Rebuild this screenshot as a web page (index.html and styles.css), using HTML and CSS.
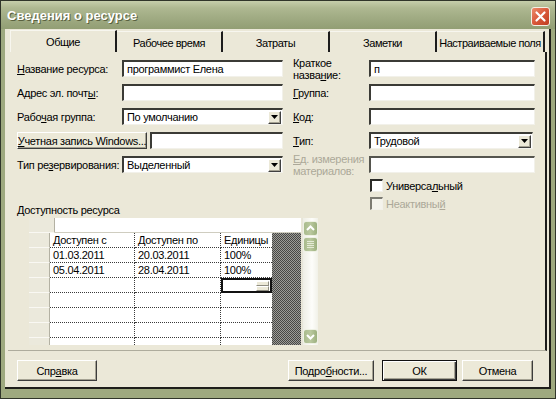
FILE: index.html
```html
<!DOCTYPE html>
<html lang="ru">
<head>
<meta charset="utf-8">
<title>Сведения о ресурсе</title>
<link rel="stylesheet" href="styles.css">
</head>
<body>
<div class="window">
  <div class="titlebar">
    <span class="title">Сведения о ресурсе</span>
    <span class="close"><svg width="17" height="17" viewBox="0 0 17 17"><path d="M4.5 4.5 L12.5 12.5 M12.5 4.5 L4.5 12.5" stroke="#fff" stroke-width="2.2" stroke-linecap="round"/></svg></span>
  </div>
  <div class="client">
    <div class="tabs">
      <div class="tab active w1">Общие</div>
      <div class="tab w2">Рабочее время</div>
      <div class="tab w3">Затраты</div>
      <div class="tab w4">Заметки</div>
      <div class="tab w5">Настраиваемые поля</div>
    </div>
    <div class="panel">
      <div class="form">
        <div class="lcol">
          <div class="row"><span class="lbl"><u>Н</u>азвание ресурса:</span><span class="inp wl">программист Елена</span></div>
          <div class="row"><span class="lbl">Адрес эл. почт<u>ы</u>:</span><span class="inp wl"></span></div>
          <div class="row"><span class="lbl">Рабо<u>ч</u>ая группа:</span><span class="inp combo wl"><span class="val">По умолчанию</span><span class="dd"><svg width="7" height="4" viewBox="0 0 7 4"><polygon points="0,0 7,0 3.5,4" fill="#000"/></svg></span></span></div>
          <div class="row"><span class="btn acct"><u>У</u>четная запись Windows...</span><span class="inp wacct"></span></div>
          <div class="row"><span class="lbl">Тип ре<u>з</u>ервирования:</span><span class="inp combo wl"><span class="val">Выделенный</span><span class="dd"><svg width="7" height="4" viewBox="0 0 7 4"><polygon points="0,0 7,0 3.5,4" fill="#000"/></svg></span></span></div>
        </div>
        <div class="rcol">
          <div class="row"><span class="lbl2 two">Краткое<br>назва<u>н</u>ие:</span><span class="inp wr">п</span></div>
          <div class="row"><span class="lbl2"><u>Г</u>руппа:</span><span class="inp wr"></span></div>
          <div class="row"><span class="lbl2"><u>К</u>од:</span><span class="inp wr"></span></div>
          <div class="row"><span class="lbl2"><u>Т</u>ип:</span><span class="inp combo wr2"><span class="val">Трудовой</span><span class="dd"><svg width="7" height="4" viewBox="0 0 7 4"><polygon points="0,0 7,0 3.5,4" fill="#000"/></svg></span></span></div>
          <div class="row"><span class="lbl2 two dis"><u>Е</u>д. измерения<br>материалов:</span><span class="inp dinp wr"></span></div>
          <div class="checks">
            <div class="chk"><span class="box"></span><span>Универса<u>л</u>ьный</span></div>
            <div class="chk dis"><span class="box"></span><span>Неактивны<u>й</u></span></div>
          </div>
        </div>
        <div class="avail">
          <div class="alabel"><u>Д</u>оступность ресурса</div>
          <div class="gridwrap">
            <div class="grid">
              <div class="toprow"><span class="corner"></span><span class="topfield"></span></div>
              <div class="table">
                <div class="rh"></div><div class="c">Доступен с</div><div class="c">Доступен по</div><div class="c last">Единицы</div>
                <div class="dither"></div>
                <div class="rh"></div><div class="c">01.03.2011</div><div class="c">20.03.2011</div><div class="c last">100%</div>
                <div class="rh"></div><div class="c">05.04.2011</div><div class="c">28.04.2011</div><div class="c last">100%</div>
                <div class="rh"></div><div class="c"></div><div class="c"></div><div class="c last sel"><span class="spin"><span></span><span></span></span></div>
                <div class="rh"></div><div class="c"></div><div class="c"></div><div class="c last"></div>
                <div class="rh"></div><div class="c"></div><div class="c"></div><div class="c last"></div>
                <div class="rh"></div><div class="c"></div><div class="c"></div><div class="c last"></div>
                <div class="rh"></div><div class="c"></div><div class="c"></div><div class="c last"></div>
              </div>
            </div>
            <div class="vscroll">
              <span class="sbtn"><svg width="13" height="13" viewBox="0 0 13 13"><polyline points="3,8 6.5,4.5 10,8" fill="none" stroke="#fff" stroke-width="2"/></svg></span>
              <span class="thumb"><i></i><i></i><i></i><i></i></span>
              <span class="sbtn down"><svg width="13" height="13" viewBox="0 0 13 13"><polyline points="3,5 6.5,8.5 10,5" fill="none" stroke="#fff" stroke-width="2"/></svg></span>
            </div>
          </div>
        </div>
      </div>
    </div>
    <div class="btns">
      <span class="btn b-help">Спр<u>а</u>вка</span>
      <span class="btn b-more">Подро<u>б</u>ности...</span>
      <span class="btn def b-ok">ОК</span>
      <span class="btn b-cancel">Отмена</span>
    </div>
  </div>
</div>
</body>
</html>
```

FILE: styles.css
```css
* { box-sizing: border-box; }
html, body { margin: 0; padding: 0; }
body {
  width: 556px; height: 399px; overflow: hidden;
  font-family: "Liberation Sans", Arial, sans-serif;
  font-size: 11px; color: #000;
  letter-spacing: -0.3px;
  background: #9aa67b;
}
u { text-decoration: underline; text-underline-offset: 1px; }

.window {
  width: 556px; height: 399px;
  border: 1px solid #30352a;
  background: #9ea97f;
  display: flex; flex-direction: column;
}
.titlebar {
  flex: none; height: 28px;
  display: flex; align-items: center; justify-content: space-between;
  padding: 0 5px 0 6px;
  background: linear-gradient(#c6ceab 0%, #aeb891 25%, #a0ab83 60%, #929e74 100%);
}
.title {
  color: #fff; font-weight: bold; font-size: 13px;
  text-shadow: 1px 1px 0 #59613f;
  letter-spacing: 0;
  margin-top: 1px;
}
.close {
  width: 19px; height: 19px; margin-top: 3px;
  border: 1px solid #f3f0e6; border-radius: 3px;
  background: linear-gradient(135deg, #ec8c6c 0%, #d9583a 50%, #bf3e22 100%);
  display: flex; align-items: center; justify-content: center;
}

.client {
  flex: 1;
  margin: 0 4px 9px 4px;
  background: #ebe8d8;
  border-right: 2px solid #1e1e1a;
  border-bottom: 2px solid #1e1e1a;
  padding-left: 3px;
  display: flex; flex-direction: column;
}

.tabs {
  flex: none; height: 23px;
  display: flex; align-items: flex-end;
  padding-left: 2px;
}
.tab {
  height: 21px;
  display: flex; align-items: center; justify-content: center;
  border-right: 2px solid #1c1c1c;
  border-top: 1px solid #f7f6ef;
  padding-top: 1px;
  white-space: nowrap;
  letter-spacing: -0.45px;
}
.tab.active { height: 22px; border-left: 1px solid #f7f6ef; }
.w1 { width: 107px; }
.w2 { width: 106px; }
.w3 { width: 107px; }
.w4 { width: 107px; }
.w5 { width: 108px; }

.panel {
  flex: none;
  width: 539px; height: 299px;
  border-right: 2px solid #1c1c1c;
  border-bottom: 1px solid #aeac9d;
  padding: 8px 0 0 9px;
}

.form {
  display: grid;
  grid-template-columns: 276px 242px;
  grid-template-rows: auto auto;
}
.lcol { grid-column: 1; grid-row: 1; display: flex; flex-direction: column; gap: 7px; }
.rcol { grid-column: 2; grid-row: 1 / span 2; display: flex; flex-direction: column; gap: 7px; }
.avail { grid-column: 1; grid-row: 2; margin-top: 31px; }

.row { height: 17px; display: flex; align-items: center; }
.lbl { width: 105px; white-space: nowrap; }
.lbl2 { width: 76px; white-space: nowrap; }
.lbl2.two { line-height: 12px; }
.dis { color: #aca899; }

.inp {
  height: 17px;
  background: #fff;
  border-style: solid;
  border-width: 2px 1px 1px 2px;
  border-color: #3b3b36 #f2f1ea #f2f1ea #3b3b36;
  padding-left: 3px;
  display: flex; align-items: center;
  white-space: nowrap;
}
.dinp { border-color: #55554e #f2f1ea #f2f1ea #55554e; }
.wl { width: 161px; }
.wr { width: 166px; }
.wr2 { width: 164px; }
.wacct { width: 133px; margin-left: 3px; }
.combo { padding-right: 1px; }
.combo .val { flex: 1; }
.dd {
  width: 13px; height: 13px;
  background: #ece9d8;
  border: 1px solid; border-color: #fff #404040 #404040 #fff;
  box-shadow: inset -1px -1px #a5a293;
  display: flex; align-items: center; justify-content: center;
}

.btn {
  background: #ece9d8;
  border: 1px solid;
  border-color: #fff #3c3c3c #3c3c3c #fff;
  box-shadow: inset -1px -1px #a5a293;
  display: flex; align-items: center; justify-content: center;
  white-space: nowrap;
}
.acct { width: 130px; height: 17px; }

.checks { display: flex; flex-direction: column; gap: 5px; margin-top: -1px; }
.chk { height: 13px; display: flex; align-items: center; gap: 3px; padding-left: 77px; }
.box {
  width: 13px; height: 13px;
  background: #fff;
  border-style: solid;
  border-width: 2px 1px 1px 2px;
  border-color: #2b2b28 #f2f1ea #f2f1ea #2b2b28;
}
.chk.dis .box { border-color: #7c7b72 #f2f1ea #f2f1ea #7c7b72; background: #f4f3ec; }

.alabel { height: 12px; line-height: 12px; white-space: nowrap; }
.gridwrap { display: flex; margin: 2px 0 0 12px; width: 289px; }
.grid { width: 272px; height: 127px; overflow: hidden; background: #fff; }
.toprow { height: 15px; display: flex; }
.corner {
  width: 26px; background: #ebe9dc;
  border-right: 1px solid #b3b1a3; border-bottom: 1px solid #f9f8f3;
}
.topfield { flex: 1; background: #fff; border-bottom: 1px solid #cfcdc0; }
.table {
  display: grid;
  grid-template-columns: 21px 85px 86px 51px 29px;
  grid-auto-rows: 15px;
}
.rh {
  grid-column: 1;
  background: #ebe9dc;
  border-right: 1px solid #b3b1a3;
  border-bottom: 1px solid #f9f8f3;
}
.c {
  background: #fff;
  border-right: 1px dotted #3a3a3a;
  border-bottom: 1px dotted #3a3a3a;
  padding-left: 3px;
  line-height: 14px;
  white-space: nowrap; overflow: hidden;
}
.c.last { border-right: none; }
.c.sel {
  border: 2px solid #111;
  display: flex; justify-content: flex-end; align-items: center;
  padding-right: 1px;
}
.spin { width: 13px; height: 10px; display: flex; flex-direction: column; }
.spin span {
  flex: 1; background: #ece9d8;
  border: 1px solid; border-color: #fff #8e8c80 #8e8c80 #fff;
}
.dither {
  grid-column: 5; grid-row: 1 / span 8;
  background: repeating-conic-gradient(#474745 0 25%, #9c9c98 0 50%) 0 0 / 2px 2px;
}

.vscroll {
  width: 16px; height: 127px; margin-left: 1px;
  background: linear-gradient(90deg, #eeeee5, #fdfdfa 60%, #f1f1e8);
  border-left: 1px solid #e6e5da;
  display: flex; flex-direction: column; align-items: center;
  padding-top: 3px;
}
.sbtn, .thumb {
  width: 15px; height: 15px;
  border: 1px solid #eef1e4;
  border-radius: 3px;
  background: linear-gradient(90deg, #a9bb8d, #b9c89e 50%, #9cb07e);
  display: flex; align-items: center; justify-content: center;
}
.thumb { margin-top: 1px; flex-direction: column; gap: 1px; }
.thumb i { display: block; width: 7px; height: 1px; background: #e4ead6; }
.sbtn.down { margin-top: auto; margin-bottom: 1px; }

.btns {
  display: flex;
  margin-top: 9px;
  padding: 0 16px 0 9px;
}
.btns .btn { height: 21px; }
.b-help { width: 80px; }
.b-more { width: 86px; margin-left: auto; }
.b-ok { width: 75px; margin-left: 8px; }
.b-cancel { width: 71px; margin-left: 5px; }
.btn.def {
  border: 1px solid #111;
  box-shadow: inset 1px 1px #fff, inset -1px -1px #3c3c3c, inset -2px -2px #a5a293;
}
```
